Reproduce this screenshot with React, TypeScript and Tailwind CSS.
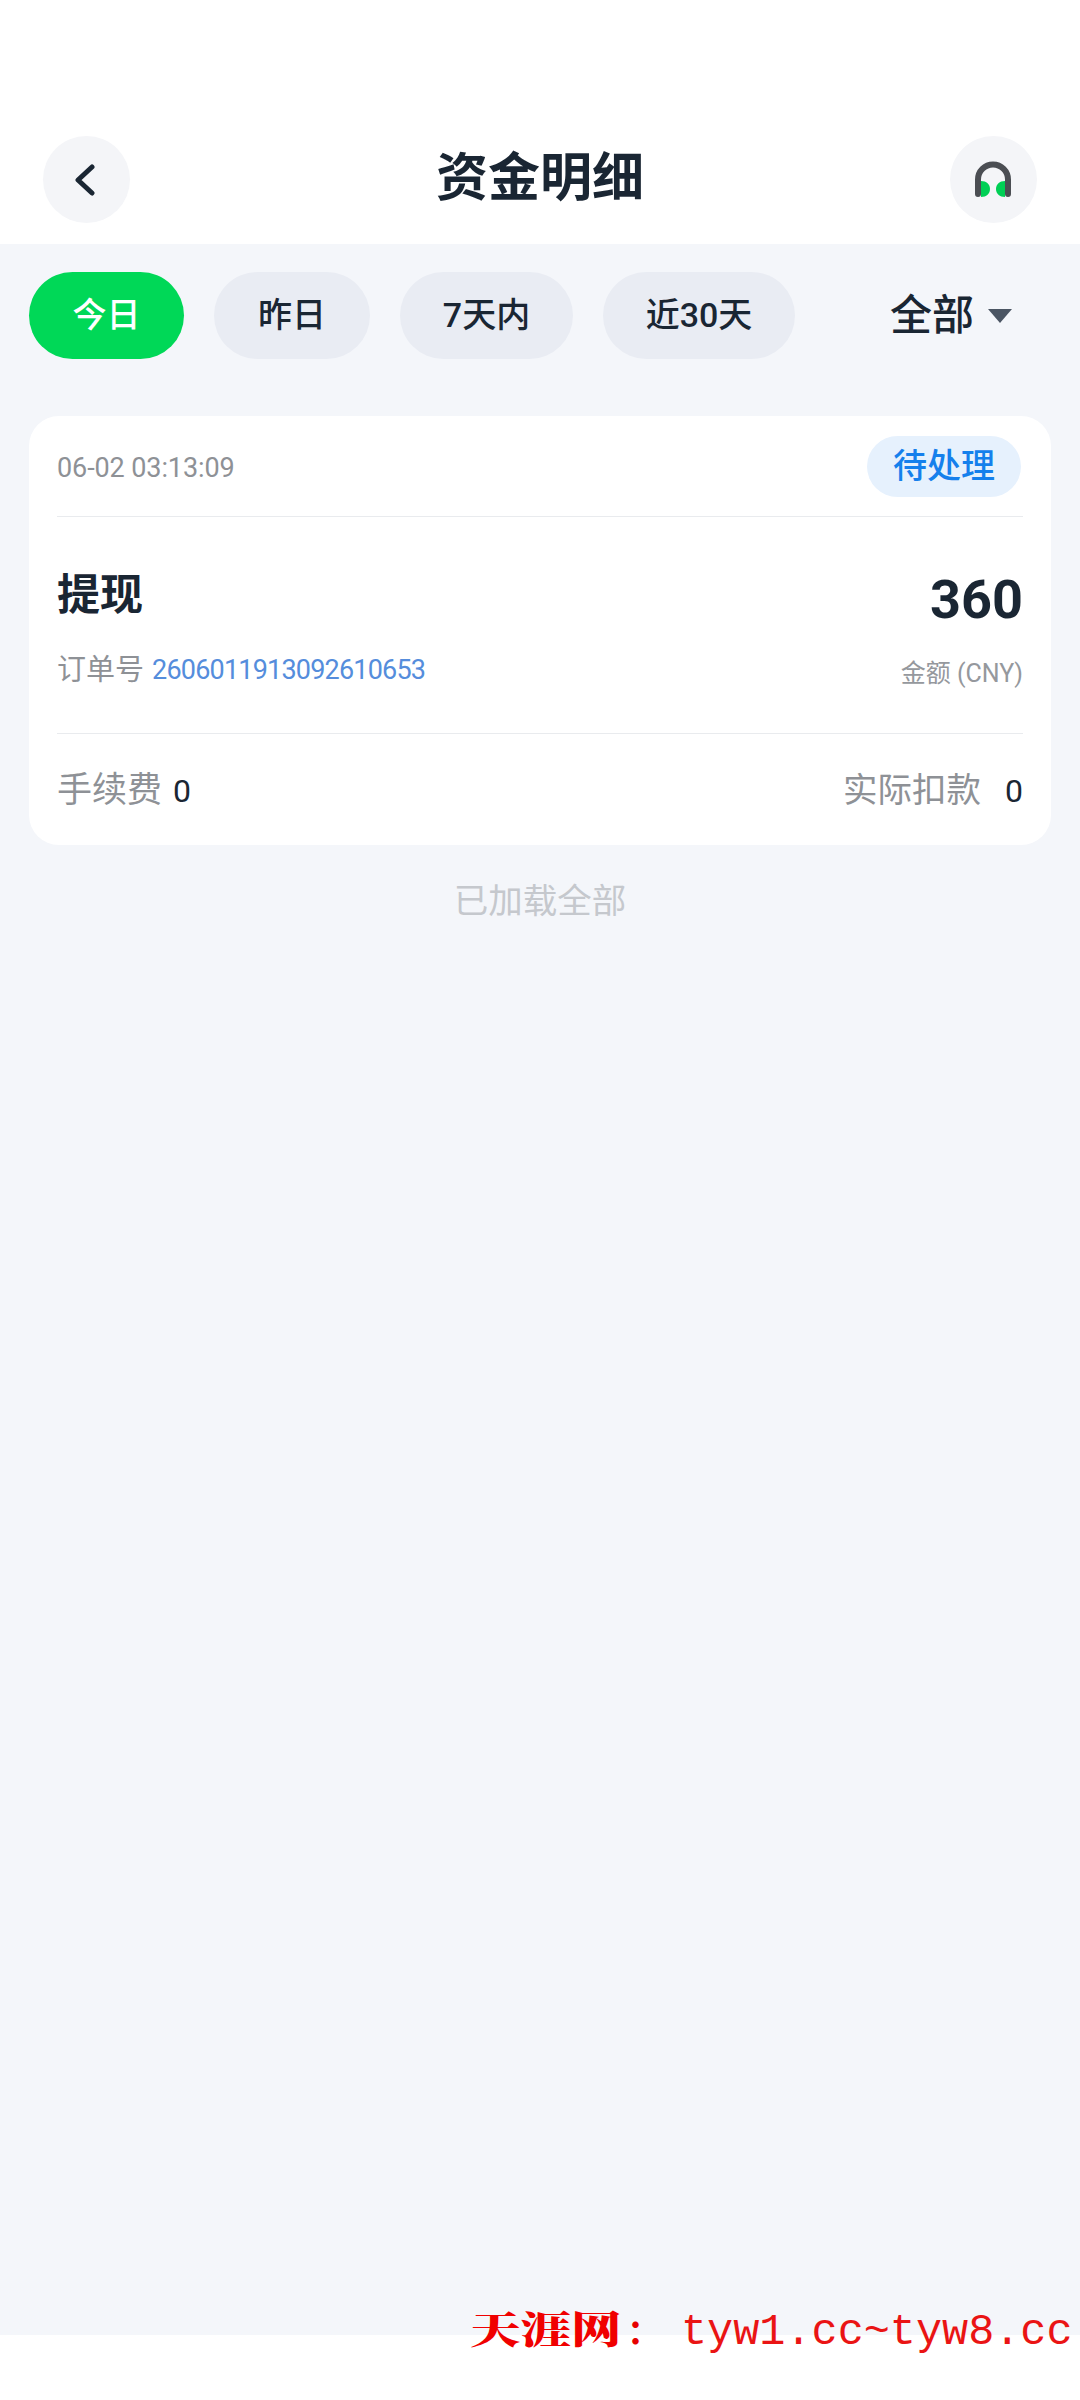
const SANS = "font-['Roboto','Noto_Sans_CJK_SC',sans-serif]";

function Tab({ label, active, w }: { label: string; active?: boolean; w: string }) {
  return (
    <div
      className={`flex h-[87px] items-center justify-center rounded-full text-[34px] font-medium ${w} ${
        active ? "bg-[#00d857] text-white" : "bg-[#e9ecf3] text-[#1a2633]"
      }`}
    >
      {label}
    </div>
  );
}

function Headset() {
  return (
    <svg width="38" height="38" viewBox="0 0 38 38" fill="none">
      <path d="M4 33V18.5a15 15 0 0 1 30 0V33" stroke="#4b4e53" strokeWidth="6" strokeLinecap="round" />
      <path d="M7 20c5.500 0 9 3.500 9 8s-3.500 8-9 8z" fill="#00cf55" />
      <path d="M31 20c-5.500 0-9 3.500-9 8s3.500 8 9 8z" fill="#00cf55" />
    </svg>
  );
}

export default function App() {
  return (
    <div className={`relative flex h-[2400px] w-[1080px] flex-col overflow-hidden bg-white ${SANS}`}>
      <header className="flex h-[244px] items-start justify-between bg-white px-[43px] pt-[136px]">
        <div className="flex h-[87px] w-[87px] items-center justify-center rounded-full bg-[#f4f5f8]">
          <svg width="24" height="34" viewBox="0 0 24 34" fill="none">
            <path d="M17 4 3 17l14 13" stroke="#1a2633" strokeWidth="5" strokeLinecap="round" strokeLinejoin="round" />
          </svg>
        </div>
        <h1 className="mt-[13px] text-[52px] font-bold leading-[60px] text-[#1a2633]">资金明细</h1>
        <div className="flex h-[87px] w-[87px] items-center justify-center rounded-full bg-[#f4f5f8]">
          <Headset />
        </div>
      </header>

      <main className="flex flex-1 flex-col bg-[#f4f6fa] px-[29px] pt-[28px]">
        <div className="flex items-center gap-[30px]">
          <Tab label="今日" active w="w-[155px]" />
          <Tab label="昨日" w="w-[156px]" />
          <Tab label="7天内" w="w-[173px]" />
          <Tab label="近30天" w="w-[192px]" />
          <div className="ml-[65px] flex items-center gap-[14px] text-[42px] font-medium leading-[60px] text-[#1a2633]">
            全部
            <svg width="24" height="14" viewBox="0 0 24 14">
              <path d="M0 0h24L12 14z" fill="#4b5563" />
            </svg>
          </div>
        </div>

        <section className="mt-[57px] flex h-[429px] flex-col rounded-[30px] bg-white px-[28px]">
          <div className="flex h-[101px] items-center justify-between border-b border-[#e9ebee]">
            <span className="mt-[5px] text-[27px] tracking-[-0.1px] text-[#8e9196]">06-02 03:13:09</span>
            <span className="mr-[2px] flex h-[61px] w-[154px] items-center justify-center rounded-full bg-[#e6f1fd] text-[34px] font-medium text-[#1580ec]">
              待处理
            </span>
          </div>

          <div className="flex h-[217px] justify-between border-b border-[#e9ebee]">
            <div className="flex flex-col pt-[48px]">
              <span className="text-[43px] font-bold leading-[60px] text-[#1a2633]">提现</span>
              <div className="mt-[25px] flex items-center gap-[8px] leading-[40px]">
                <span className="text-[29px] text-[#8e9196]">订单号</span>
                <span className="text-[27px] tracking-[-0.8px] text-[#558ddc]">2606011913092610653</span>
              </div>
            </div>
            <div className="flex flex-col items-end pt-[48px]">
              <span className="text-[54px] font-bold leading-[70px] text-[#1a2633]">360</span>
              <span className="mt-[19px] text-[25px] leading-[40px] text-[#95989d]">金额 (CNY)</span>
            </div>
          </div>

          <div className="flex flex-1 items-center justify-between pt-[3px]">
            <div className="flex items-center gap-[11px]">
              <span className="text-[35px] text-[#8e9196]">手续费</span>
              <span className="text-[32px] text-[#1a2633]">0</span>
            </div>
            <div className="flex items-center gap-[24px]">
              <span className="text-[34.500px] text-[#8e9196]">实际扣款</span>
              <span className="text-[32px] text-[#1a2633]">0</span>
            </div>
          </div>
        </section>

        <p className="mt-[31px] text-center text-[34.500px] leading-[50px] text-[#c5c8cd]">已加载全部</p>
      </main>

      <div className="h-[65px] bg-white" />

      <div className="absolute left-[470px] top-[2305px] flex h-[50px] items-center whitespace-nowrap text-[#e60000]">
        <span className="-mt-[6px] w-[155px] origin-left scale-x-[1.33] font-['Noto_Serif_CJK_SC','Noto_Sans_CJK_SC',serif] text-[38px] font-black leading-[50px] text-[#f00000]">
          天涯网
        </span>
        <span className="ml-[2px] w-[54px] font-['Noto_Sans_CJK_SC',sans-serif] text-[34px] font-bold leading-[50px]">：</span>
        <span className="mt-[6px] font-['Liberation_Mono',monospace] text-[43.500px] leading-[50px] text-[#ea1414]">tyw1.cc~tyw8.cc</span>
      </div>
    </div>
  );
}
